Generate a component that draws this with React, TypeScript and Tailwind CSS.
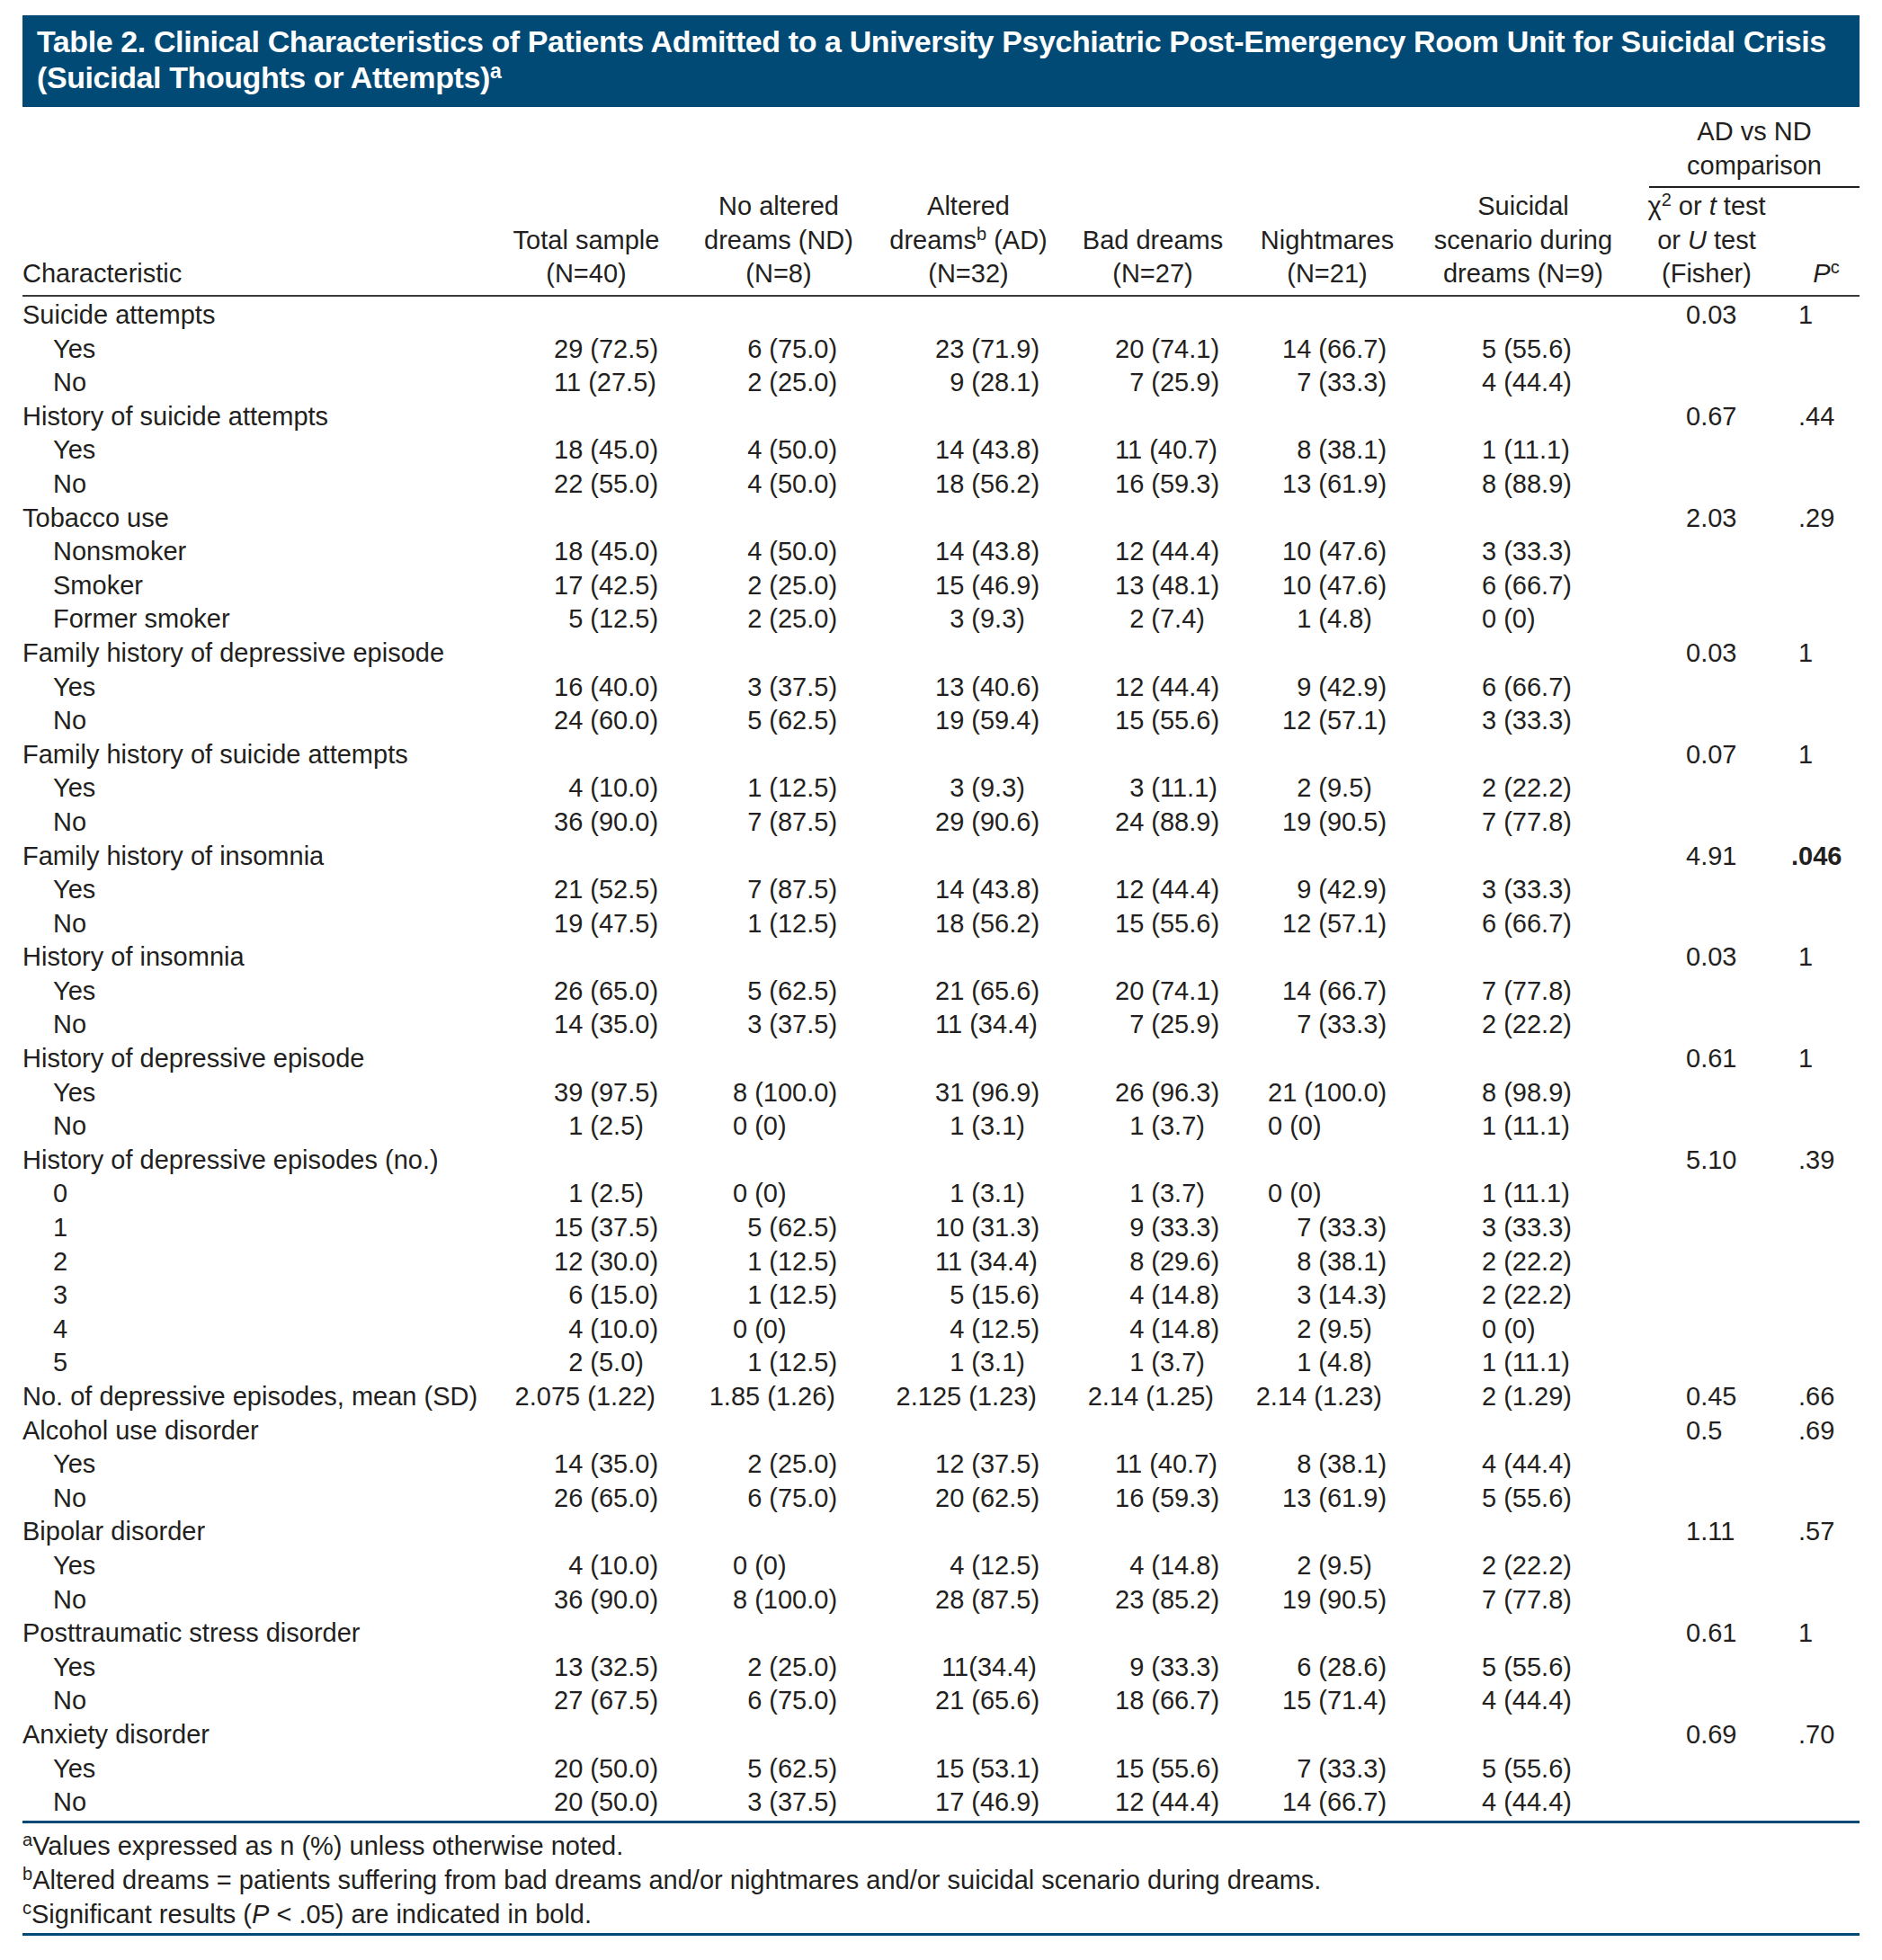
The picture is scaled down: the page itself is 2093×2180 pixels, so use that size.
import React from "react";

type Row =
  | { kind: "group"; label: string; chi?: string; p?: string; bold?: boolean; values?: string[] }
  | { kind: "item"; label: string; values: string[] };

// cell codes: "_" = pad with an invisible digit, ">" = right aligned, "<" = pulled one digit left
const rows: Row[] = [
  { kind: "group", label: "Suicide attempts", chi: "0.03", p: "1" },
  { kind: "item", label: "Yes", values: ["29 (72.5)", "_6 (75.0)", "23 (71.9)", "20 (74.1)", "14 (66.7)", "5 (55.6)"] },
  { kind: "item", label: "No", values: ["11 (27.5)", "_2 (25.0)", "_9 (28.1)", "_7 (25.9)", "_7 (33.3)", "4 (44.4)"] },
  { kind: "group", label: "History of suicide attempts", chi: "0.67", p: ".44" },
  { kind: "item", label: "Yes", values: ["18 (45.0)", "_4 (50.0)", "14 (43.8)", "11 (40.7)", "_8 (38.1)", "1 (11.1)"] },
  { kind: "item", label: "No", values: ["22 (55.0)", "_4 (50.0)", "18 (56.2)", "16 (59.3)", "13 (61.9)", "8 (88.9)"] },
  { kind: "group", label: "Tobacco use", chi: "2.03", p: ".29" },
  { kind: "item", label: "Nonsmoker", values: ["18 (45.0)", "_4 (50.0)", "14 (43.8)", "12 (44.4)", "10 (47.6)", "3 (33.3)"] },
  { kind: "item", label: "Smoker", values: ["17 (42.5)", "_2 (25.0)", "15 (46.9)", "13 (48.1)", "10 (47.6)", "6 (66.7)"] },
  { kind: "item", label: "Former smoker", values: ["_5 (12.5)", "_2 (25.0)", "_3 (9.3)", "_2 (7.4)", "_1 (4.8)", "0 (0)"] },
  { kind: "group", label: "Family history of depressive episode", chi: "0.03", p: "1" },
  { kind: "item", label: "Yes", values: ["16 (40.0)", "_3 (37.5)", "13 (40.6)", "12 (44.4)", "_9 (42.9)", "6 (66.7)"] },
  { kind: "item", label: "No", values: ["24 (60.0)", "_5 (62.5)", "19 (59.4)", "15 (55.6)", "12 (57.1)", "3 (33.3)"] },
  { kind: "group", label: "Family history of suicide attempts", chi: "0.07", p: "1" },
  { kind: "item", label: "Yes", values: ["_4 (10.0)", "_1 (12.5)", "_3 (9.3)", "_3 (11.1)", "_2 (9.5)", "2 (22.2)"] },
  { kind: "item", label: "No", values: ["36 (90.0)", "_7 (87.5)", "29 (90.6)", "24 (88.9)", "19 (90.5)", "7 (77.8)"] },
  { kind: "group", label: "Family history of insomnia", chi: "4.91", p: ".046", bold: true },
  { kind: "item", label: "Yes", values: ["21 (52.5)", "_7 (87.5)", "14 (43.8)", "12 (44.4)", "_9 (42.9)", "3 (33.3)"] },
  { kind: "item", label: "No", values: ["19 (47.5)", "_1 (12.5)", "18 (56.2)", "15 (55.6)", "12 (57.1)", "6 (66.7)"] },
  { kind: "group", label: "History of insomnia", chi: "0.03", p: "1" },
  { kind: "item", label: "Yes", values: ["26 (65.0)", "_5 (62.5)", "21 (65.6)", "20 (74.1)", "14 (66.7)", "7 (77.8)"] },
  { kind: "item", label: "No", values: ["14 (35.0)", "_3 (37.5)", "11 (34.4)", "_7 (25.9)", "_7 (33.3)", "2 (22.2)"] },
  { kind: "group", label: "History of depressive episode", chi: "0.61", p: "1" },
  { kind: "item", label: "Yes", values: ["39 (97.5)", "8 (100.0)", "31 (96.9)", "26 (96.3)", "<21 (100.0)", "8 (98.9)"] },
  { kind: "item", label: "No", values: ["_1 (2.5)", "0 (0)", "_1 (3.1)", "_1 (3.7)", "<0 (0)", "1 (11.1)"] },
  { kind: "group", label: "History of depressive episodes (no.)", chi: "5.10", p: ".39" },
  { kind: "item", label: "0", values: ["_1 (2.5)", "0 (0)", "_1 (3.1)", "_1 (3.7)", "<0 (0)", "1 (11.1)"] },
  { kind: "item", label: "1", values: ["15 (37.5)", "_5 (62.5)", "10 (31.3)", "_9 (33.3)", "_7 (33.3)", "3 (33.3)"] },
  { kind: "item", label: "2", values: ["12 (30.0)", "_1 (12.5)", "11 (34.4)", "_8 (29.6)", "_8 (38.1)", "2 (22.2)"] },
  { kind: "item", label: "3", values: ["_6 (15.0)", "_1 (12.5)", "_5 (15.6)", "_4 (14.8)", "_3 (14.3)", "2 (22.2)"] },
  { kind: "item", label: "4", values: ["_4 (10.0)", "0 (0)", "_4 (12.5)", "_4 (14.8)", "_2 (9.5)", "0 (0)"] },
  { kind: "item", label: "5", values: ["_2 (5.0)", "_1 (12.5)", "_1 (3.1)", "_1 (3.7)", "_1 (4.8)", "1 (11.1)"] },
  {
    kind: "group",
    label: "No. of depressive episodes, mean (SD)",
    values: [">2.075 (1.22)", ">1.85 (1.26)", ">2.125 (1.23)", ">2.14 (1.25)", ">2.14 (1.23)", "2 (1.29)"],
    chi: "0.45",
    p: ".66"
  },
  { kind: "group", label: "Alcohol use disorder", chi: "0.5", p: ".69" },
  { kind: "item", label: "Yes", values: ["14 (35.0)", "_2 (25.0)", "12 (37.5)", "11 (40.7)", "_8 (38.1)", "4 (44.4)"] },
  { kind: "item", label: "No", values: ["26 (65.0)", "_6 (75.0)", "20 (62.5)", "16 (59.3)", "13 (61.9)", "5 (55.6)"] },
  { kind: "group", label: "Bipolar disorder", chi: "1.11", p: ".57" },
  { kind: "item", label: "Yes", values: ["_4 (10.0)", "0 (0)", "_4 (12.5)", "_4 (14.8)", "_2 (9.5)", "2 (22.2)"] },
  { kind: "item", label: "No", values: ["36 (90.0)", "8 (100.0)", "28 (87.5)", "23 (85.2)", "19 (90.5)", "7 (77.8)"] },
  { kind: "group", label: "Posttraumatic stress disorder", chi: "0.61", p: "1" },
  { kind: "item", label: "Yes", values: ["13 (32.5)", "_2 (25.0)", ">11(34.4)", "_9 (33.3)", "_6 (28.6)", "5 (55.6)"] },
  { kind: "item", label: "No", values: ["27 (67.5)", "_6 (75.0)", "21 (65.6)", "18 (66.7)", "15 (71.4)", "4 (44.4)"] },
  { kind: "group", label: "Anxiety disorder", chi: "0.69", p: ".70" },
  { kind: "item", label: "Yes", values: ["20 (50.0)", "_5 (62.5)", "15 (53.1)", "15 (55.6)", "_7 (33.3)", "5 (55.6)"] },
  { kind: "item", label: "No", values: ["20 (50.0)", "_3 (37.5)", "17 (46.9)", "12 (44.4)", "14 (66.7)", "4 (44.4)"] }
];

const bodyCols = "grid grid-cols-[535px_189px_200px_224px_197px_187px_203px_200px_108px]";
const headCols = "grid grid-cols-[535px_184px_244px_178px_232px_156px_280px_128px_106px]";
const padLeft = ["pl-[56px]", "pl-[66px]", "pl-[91px]", "pl-[67px]", "pl-[56px]", "pl-[91px]"];

function ValueCell({ value, col }: { value: string; col: number }) {
  if (value.startsWith(">")) {
    return <div className="whitespace-nowrap pr-[20px] text-right">{value.slice(1)}</div>;
  }
  if (value.startsWith("_")) {
    return (
      <div className={`whitespace-nowrap ${padLeft[col]}`}>
        <span className="invisible">0</span>
        {value.slice(1)}
      </div>
    );
  }
  if (value.startsWith("<")) {
    return (
      <div className={`whitespace-nowrap ${padLeft[col]}`}>
        <span className="ml-[-16px]">{value.slice(1)}</span>
      </div>
    );
  }
  return <div className={`whitespace-nowrap ${padLeft[col]}`}>{value}</div>;
}

function HeadCell({ children }: { children: React.ReactNode }) {
  return <div className="flex flex-col items-center whitespace-nowrap">{children}</div>;
}

function Sup({ children }: { children: React.ReactNode }) {
  return <sup className="text-[20px]">{children}</sup>;
}

export default function App() {
  return (
    <div className="min-h-screen bg-white px-[25px] pt-[17px] font-['Liberation_Sans',Arial,sans-serif] text-[#231f20]">
      <div className="whitespace-nowrap bg-[#014a76] pb-[13px] pl-[16px] pt-[9px] text-[34px] font-bold leading-[40px] tracking-[-0.4px] text-white">
        Table 2. Clinical Characteristics of Patients Admitted to a University Psychiatric Post-Emergency
        Room Unit for Suicidal Crisis
        <br />
        (Suicidal Thoughts or Attempts)
        <sup className="text-[23px]">a</sup>
      </div>

      <div className={`${headCols} h-[209px] items-end pb-[4px] text-[29px] leading-[37.6px]`}>
        <div className="whitespace-nowrap">Characteristic</div>
        <HeadCell>
          <span>Total sample</span>
          <span>(N=40)</span>
        </HeadCell>
        <HeadCell>
          <span>No altered</span>
          <span>dreams (ND)</span>
          <span>(N=8)</span>
        </HeadCell>
        <HeadCell>
          <span>Altered</span>
          <span>
            dreams<Sup>b</Sup> (AD)
          </span>
          <span>(N=32)</span>
        </HeadCell>
        <HeadCell>
          <span>Bad dreams</span>
          <span>(N=27)</span>
        </HeadCell>
        <HeadCell>
          <span>Nightmares</span>
          <span>(N=21)</span>
        </HeadCell>
        <HeadCell>
          <span>Suicidal</span>
          <span>scenario during</span>
          <span>dreams (N=9)</span>
        </HeadCell>
        <div className="col-span-2 flex flex-col">
          <HeadCell>
            <span>AD vs ND</span>
            <span>comparison</span>
          </HeadCell>
          <div className="mb-[2px] mt-[4px] h-[2px] bg-[#231f20]" />
          <div className="grid grid-cols-[128px_106px] items-end">
            <HeadCell>
              <span>
                χ<Sup>2</Sup> or <i>t</i> test
              </span>
              <span>
                or <i>U</i> test
              </span>
              <span>(Fisher)</span>
            </HeadCell>
            <div className="flex flex-col items-center pl-[32px]">
              <span>
                <i>P</i>
                <Sup>c</Sup>
              </span>
            </div>
          </div>
        </div>
      </div>

      <div className="h-[2px] bg-[#3a3a3a]" />

      <div className="mt-[2px] text-[29px] leading-[37.6px]">
        {rows.map((row, index) => (
          <div key={index} className={`${bodyCols} h-[37.6px] items-center`}>
            <div className={`whitespace-nowrap ${row.kind === "item" ? "pl-[34px]" : ""}`}>{row.label}</div>
            {row.values
              ? row.values.map((value, col) => <ValueCell key={col} value={value} col={col} />)
              : [0, 1, 2, 3, 4, 5].map((col) => <div key={col} />)}
            <div className="whitespace-nowrap pl-[115px]">{row.kind === "group" ? row.chi : ""}</div>
            <div
              className={`whitespace-nowrap ${
                row.kind === "group" && row.bold ? "pl-[32px] font-bold" : "pl-[40px]"
              }`}
            >
              {row.kind === "group" ? row.p : ""}
            </div>
          </div>
        ))}
      </div>

      <div className="mt-[1px] h-[3px] bg-[#014a76]" />

      <div className="pt-[7.7px] text-[29px] leading-[37.6px]">
        <p className="whitespace-nowrap">
          <Sup>a</Sup>Values expressed as n (%) unless otherwise noted.
        </p>
        <p className="whitespace-nowrap">
          <Sup>b</Sup>Altered dreams = patients suffering from bad dreams and/or nightmares and/or suicidal scenario
          during dreams.
        </p>
        <p className="whitespace-nowrap">
          <Sup>c</Sup>Significant results (<i>P</i> &lt; .05) are indicated in bold.
        </p>
      </div>

      <div className="mt-[1.5px] h-[3px] bg-[#014a76]" />
    </div>
  );
}
